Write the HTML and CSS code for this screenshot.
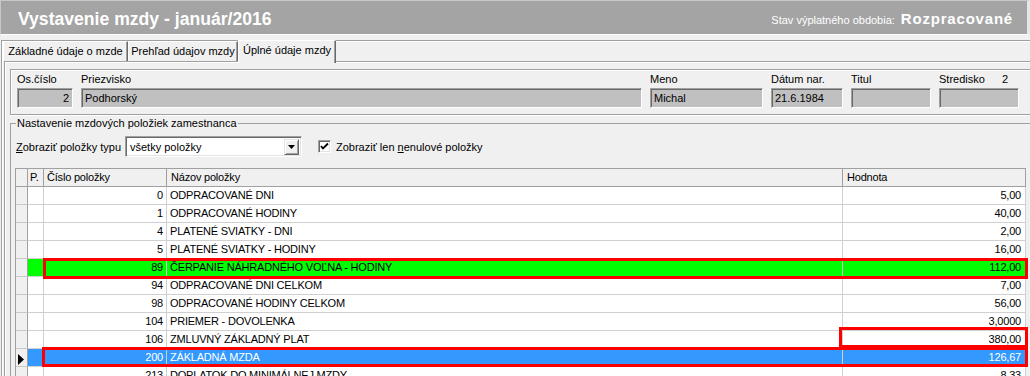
FILE: index.html
```html
<!DOCTYPE html>
<html lang="sk">
<head>
<meta charset="utf-8">
<title>Vystavenie mzdy</title>
<link rel="stylesheet" href="styles.css">
</head>
<body>
<header class="titlebar">
  <h1 class="title">Vystavenie mzdy - január/2016</h1>
  <div class="status"><span class="status-label">Stav výplatného obdobia:</span><span class="status-value">Rozpracované</span></div>
</header>
<div class="frame">
  <nav class="tabs">
    <div class="tab tab-1">Základné údaje o mzde</div>
    <div class="tab tab-2">Prehľad údajov mzdy</div>
    <div class="tab tab-3 active">Úplné údaje mzdy</div>
  </nav>
  <main class="panel">
    <div class="group person">
      <div class="field"><span class="label">Os.číslo</span><div class="input num">2</div></div>
      <div class="field"><span class="label">Priezvisko</span><div class="input">Podhorský</div></div>
      <div class="field"><span class="label">Meno</span><div class="input">Michal</div></div>
      <div class="field"><span class="label">Dátum nar.</span><div class="input">21.6.1984</div></div>
      <div class="field"><span class="label">Titul</span><div class="input"></div></div>
      <div class="field"><span class="label label-split"><span>Stredisko</span><span>2</span></span><div class="input"></div></div>
    </div>
    <fieldset class="settings">
      <legend>Nastavenie mzdových položiek zamestnanca</legend>
      <div class="filter">
        <span class="filter-label"><u>Z</u>obraziť položky typu</span>
        <div class="combo">
          <span>všetky položky</span>
          <span class="combo-btn"><svg width="7" height="4" viewBox="0 0 7 4"><polygon points="0,0 7,0 3.5,4" fill="#000"/></svg></span>
        </div>
        <span class="check"><svg width="9" height="9" viewBox="0 0 9 9"><polyline points="1,4 3,6.5 8,1.5" fill="none" stroke="#000" stroke-width="1.8"/></svg></span>
        <span class="check-label">Zobraziť len <u>n</u>enulové položky</span>
      </div>
      <div class="grid-wrap">
        <table class="grid">
          <colgroup>
            <col class="c-ind"><col class="c-p"><col class="c-num"><col class="c-name"><col class="c-val">
          </colgroup>
          <thead>
            <tr><th class="ind"></th><th>P.</th><th>Číslo položky</th><th>Názov položky</th><th>Hodnota</th></tr>
          </thead>
          <tbody>
            <tr><td class="ind"></td><td></td><td class="r">0</td><td>ODPRACOVANÉ DNI</td><td class="r v">5,00</td></tr>
            <tr><td class="ind"></td><td></td><td class="r">1</td><td>ODPRACOVANÉ HODINY</td><td class="r v">40,00</td></tr>
            <tr><td class="ind"></td><td></td><td class="r">4</td><td>PLATENÉ SVIATKY - DNI</td><td class="r v">2,00</td></tr>
            <tr><td class="ind"></td><td></td><td class="r">5</td><td>PLATENÉ SVIATKY - HODINY</td><td class="r v">16,00</td></tr>
            <tr class="row-green"><td class="ind"></td><td></td><td class="r">89</td><td>ČERPANIE NÁHRADNÉHO VOĽNA - HODINY</td><td class="r v">112,00</td></tr>
            <tr><td class="ind"></td><td></td><td class="r">94</td><td>ODPRACOVANÉ DNI CELKOM</td><td class="r v">7,00</td></tr>
            <tr><td class="ind"></td><td></td><td class="r">98</td><td>ODPRACOVANÉ HODINY CELKOM</td><td class="r v">56,00</td></tr>
            <tr><td class="ind"></td><td></td><td class="r">104</td><td>PRIEMER - DOVOLENKA</td><td class="r v">3,0000</td></tr>
            <tr><td class="ind"></td><td></td><td class="r">106</td><td>ZMLUVNÝ ZÁKLADNÝ PLAT</td><td class="r v">380,00</td></tr>
            <tr class="row-sel"><td class="ind"><svg width="7" height="11" viewBox="0 0 7 11"><polygon points="0,0 6,5.5 0,11" fill="#000"/></svg></td><td></td><td class="r">200</td><td>ZÁKLADNÁ MZDA</td><td class="r v">126,67</td></tr>
            <tr><td class="ind"></td><td></td><td class="r">213</td><td>DOPLATOK DO MINIMÁLNEJ MZDY</td><td class="r v">8,33</td></tr>
          </tbody>
        </table>
        <div class="mark mark-green"></div>
        <div class="mark mark-value"></div>
        <div class="mark mark-blue"></div>
      </div>
    </fieldset>
  </main>
</div>
</body>
</html>
```
FILE: styles.css
```css
* { box-sizing: border-box; }
html, body { margin: 0; padding: 0; }
body {
  width: 1030px;
  height: 376px;
  overflow: hidden;
  background: #f0f0f0;
  font-family: "Liberation Sans", Arial, sans-serif;
  font-size: 11px;
  color: #000;
}

/* title bar */
.titlebar {
  height: 35px;
  display: flex;
  align-items: center;
  justify-content: space-between;
  padding: 4px 14px 0 17px;
  background: #a4a4a4;
  border-top: 1px solid #c8c8c8;
  border-left: 1px solid #c8c8c8;
  border-right: 3px solid #e6e6e6;
  border-bottom: 1px solid #fff;
  color: #fff;
}
.title {
  margin: 0;
  font-size: 17.6px;
  font-weight: bold;
  line-height: normal;
}
.status {
  display: flex;
  align-items: baseline;
  margin-bottom: 3px;
}
.status-label { font-size: 11px; }
.status-value {
  margin-left: 6px;
  font-size: 15px;
  font-weight: bold;
  letter-spacing: 0.8px;
}

/* frame + tabs */
.frame {
  margin: 5px 0 0 1px;
  border-top: 1px solid #a0a0a0;
  border-left: 1px solid #a0a0a0;
  box-shadow: inset 1px 1px 0 #fff;
}
.tabs {
  display: flex;
  height: 20px;
  padding-left: 1px;
}
.tab {
  line-height: 18px;
  text-align: center;
  white-space: nowrap;
  border-top: 1px solid #fff;
  border-left: 1px solid #fff;
  border-right: 1px solid #696969;
  box-shadow: inset -1px 0 0 #a0a0a0;
  background: #f0f0f0;
}
.tab-1 { width: 125px; }
.tab-2 { width: 110px; }
.tab-3 { width: 98px; }
.tab.active {
  position: relative;
  margin: -1px 0 -2px 0;
  line-height: 18px;
  padding-bottom: 3px;
}

/* panel */
.panel {
  margin-left: 2px;
  border-top: 1px solid #a0a0a0;
  border-left: 1px solid #a0a0a0;
  box-shadow: inset 1px 1px 0 #fff;
  padding: 7px 0 0 5px;
  height: 320px;
  overflow: hidden;
}

.group.person {
  display: grid;
  grid-template-columns: 56px 561px 113px 72px 80px 80px;
  column-gap: 8px;
  padding: 3px 0 6px 6px;
  margin-right: -20px;
  border: 1px solid #a0a0a0;
  border-right: none;
  box-shadow: inset 1px 1px 0 #fff, 0 1px 0 #fff;
}
.field {
  display: flex;
  flex-direction: column;
  gap: 2px;
}
.label {
  height: 13px;
  line-height: 13px;
  white-space: nowrap;
}
.label-split {
  display: flex;
  justify-content: space-between;
  padding-right: 11px;
}
.input {
  height: 20px;
  line-height: 18px;
  padding: 0 3px;
  background: #c0c0c0;
  border: 1px solid;
  border-color: #a0a0a0 #fff #fff #a0a0a0;
  box-shadow: inset 1px 1px 0 #696969;
  white-space: nowrap;
}
.input.num { text-align: right; }

/* settings group */
.settings {
  margin: 2px -20px 0 0;
  padding: 6px 0 0 5px;
  border: 1px solid #a0a0a0;
  border-right: none;
  border-bottom: none;
  min-width: 0;
}
.settings legend {
  padding: 0 1px;
  line-height: 13px;
}

.filter {
  display: flex;
  align-items: center;
  height: 21px;
}
.filter-label { width: 109px; white-space: nowrap; }
.combo {
  width: 177px;
  height: 21px;
  display: flex;
  align-items: center;
  justify-content: space-between;
  padding: 1px 2px 1px 4px;
  background: #fff;
  border: 1px solid;
  border-color: #a0a0a0 #fff #fff #a0a0a0;
  box-shadow: inset 1px 1px 0 #696969, inset -1px -1px 0 #e3e3e3;
}
.combo-btn {
  width: 15px;
  height: 16px;
  display: flex;
  align-items: center;
  justify-content: center;
  background: #f0f0f0;
  border: 1px solid;
  border-color: #e3e3e3 #696969 #696969 #e3e3e3;
  box-shadow: inset 1px 1px 0 #fff, inset -1px -1px 0 #a0a0a0;
}
.check {
  width: 13px;
  height: 13px;
  margin-left: 16px;
  display: flex;
  align-items: center;
  justify-content: center;
  background: #fff;
  border: 1px solid;
  border-color: #a0a0a0 #fff #fff #a0a0a0;
  box-shadow: inset 1px 1px 0 #696969, inset -1px -1px 0 #e3e3e3;
}
.check-label { margin-left: 5px; white-space: nowrap; }

/* grid */
.grid-wrap {
  position: relative;
  margin: 11px 0 0 -1px;
}
.grid {
  table-layout: fixed;
  width: 1011px;
  border-collapse: separate;
  border-spacing: 0;
  border-top: 1px solid #a0a0a0;
  border-left: 1px solid #a0a0a0;
  background: #fff;
}
.c-ind { width: 12px; }
.c-p { width: 16px; }
.c-num { width: 123px; }
.c-name { width: 676px; }
.c-val { width: 183px; }
.grid th, .grid td {
  height: 18px;
  padding: 0 3px 0 3px;
  line-height: 17px;
  border-right: 1px solid #d0d0d0;
  border-bottom: 1px solid #d0d0d0;
  white-space: nowrap;
  overflow: hidden;
  text-align: left;
  font-weight: normal;
  letter-spacing: -0.2px;
}
.grid th {
  background: #f0f0f0;
  border-right-color: #a0a0a0;
  border-bottom-color: #a0a0a0;
}
.grid th:nth-child(2) { padding-left: 2px; }
.grid th:nth-child(4), .grid th:nth-child(5) { padding-left: 4px; }
.grid td.ind {
  padding: 0;
  background: #f0f0f0;
  border-right-color: #a0a0a0;
  border-bottom-color: #c8c8c8;
  text-align: center;
}
.grid td.ind svg { display: block; margin: 3px 0 0 2px; }
.grid td.r { text-align: right; }
.grid td.v { padding-right: 4px; }
.row-green td:not(.ind) { background: #00ff00; }
.row-sel td:not(.ind) { background: #3399ff; color: #fff; }

.mark {
  position: absolute;
  border: 3px solid #ff0000;
  pointer-events: none;
}
.mark-green { left: 28px; top: 90px; width: 985px; height: 21px; }
.mark-value { left: 824px; top: 159px; width: 189px; height: 21px; }
.mark-blue { left: 27px; top: 179px; width: 986px; height: 20px; }
```
